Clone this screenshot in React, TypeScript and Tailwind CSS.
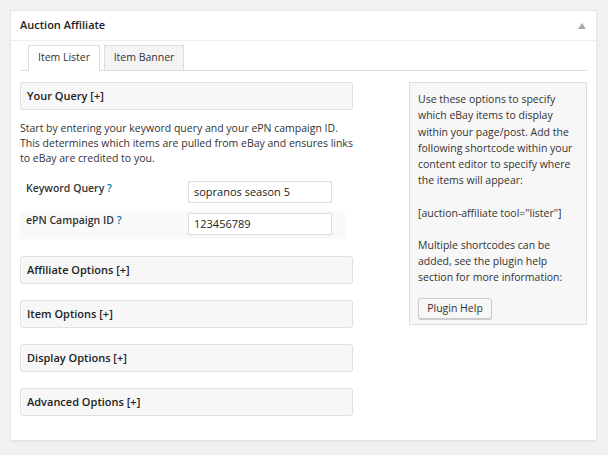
import React from "react";

const font = { fontFamily: '"Open Sans", "Noto Sans", sans-serif' };

function Section({ title }: { title: string }) {
  return (
    <div className="h-[28px] rounded-[3px] border border-[#e1e1e1] bg-[#f7f7f7] flex items-center pl-[6px] text-[11px] font-semibold text-[#222]">
      {title} [+]
    </div>
  );
}

export default function App() {
  return (
    <div className="w-[608px] h-[455px] bg-[#f1f1f1] pt-[10px] pl-[10px]" style={font}>
      <div className="w-[587px] h-[431px] bg-white border border-[#e5e5e5] shadow-[0_1px_1px_rgba(0,0,0,0.04)]">
        <div className="h-[30px] border-b border-[#eee] flex items-center justify-between pl-[9px] pr-[10px]">
          <span className="text-[11px] font-semibold text-[#222]">Auction Affiliate</span>
          <span className="w-0 h-0 border-l-[4px] border-r-[4px] border-b-[6px] border-l-transparent border-r-transparent border-b-[#aaa]"></span>
        </div>
        <div className="px-[9px]">
          <div className="mt-[4px] h-[26px] border-b border-[#ddd] flex items-end pl-[8px] gap-[4px]">
            <div className="h-[26px] w-[72px] border border-[#ddd] border-b-0 bg-white -mb-px flex items-center justify-center text-[10.5px] text-[#333] pb-px">
              Item Lister
            </div>
            <div className="h-[25px] w-[80px] border border-[#ddd] border-b-0 bg-[#f4f4f4] flex items-center justify-center text-[10.5px] text-[#333]">
              Item Banner
            </div>
          </div>
          <div className="flex mt-[11px] justify-between">
            <div className="w-[333px]">
              <Section title="Your Query" />
              <p className="mt-[11px] text-[10.5px] leading-[15px] text-[#333]">
                Start by entering your keyword query and your ePN campaign ID. This determines which items are pulled from eBay and ensures links to eBay are credited to you.
              </p>
              <div className="mt-[13px] w-[325px]">
                <div className="h-[32px] flex items-start">
                  <div className="w-[168px] pl-[6px] pt-[1px] leading-[16px] text-[10.5px] font-semibold text-[#333]">
                    Keyword Query <span className="text-[#0073aa]">?</span>
                  </div>
                  <div className="mt-[2px] w-[144px] h-[22px] border border-[#ddd] bg-white flex items-center pl-[5px] text-[11px] text-[#222]">
                    sopranos season 5
                  </div>
                </div>
                <div className="h-[28px] flex items-start bg-[#f9f9f9]">
                  <div className="w-[168px] pl-[6px] pt-[1px] leading-[16px] text-[10.5px] font-semibold text-[#333]">
                    ePN Campaign ID <span className="text-[#0073aa]">?</span>
                  </div>
                  <div className="mt-[2px] w-[144px] h-[22px] border border-[#ddd] bg-white flex items-center pl-[5px] text-[11px] text-[#222]">
                    123456789
                  </div>
                </div>
              </div>
              <div className="mt-[17px] flex flex-col gap-[16px]">
                <Section title="Affiliate Options" />
                <Section title="Item Options" />
                <Section title="Display Options" />
                <Section title="Advanced Options" />
              </div>
            </div>
            <div className="w-[178px] h-[243px] border border-[#ddd] bg-[#f7f7f7] pl-[8px] pr-[6px] pt-[8px] text-[10.5px] leading-[16.25px] text-[#333]">
              <p>Use these options to specify which eBay items to display within your page/post. Add the following shortcode within your content editor to specify where the items will appear:</p>
              <p className="mt-[16px]">[auction-affiliate tool="lister"]</p>
              <p className="mt-[16px]">Multiple shortcodes can be added, see the plugin help section for more information:</p>
              <div className="mt-[12px] w-[74px] h-[21px] rounded-[3px] border border-[#ccc] bg-[#f7f7f7] shadow-[0_1px_0_#ccc] flex items-center justify-center text-[10.5px] text-[#333]">
                Plugin Help
              </div>
            </div>
          </div>
        </div>
      </div>
    </div>
  );
}
